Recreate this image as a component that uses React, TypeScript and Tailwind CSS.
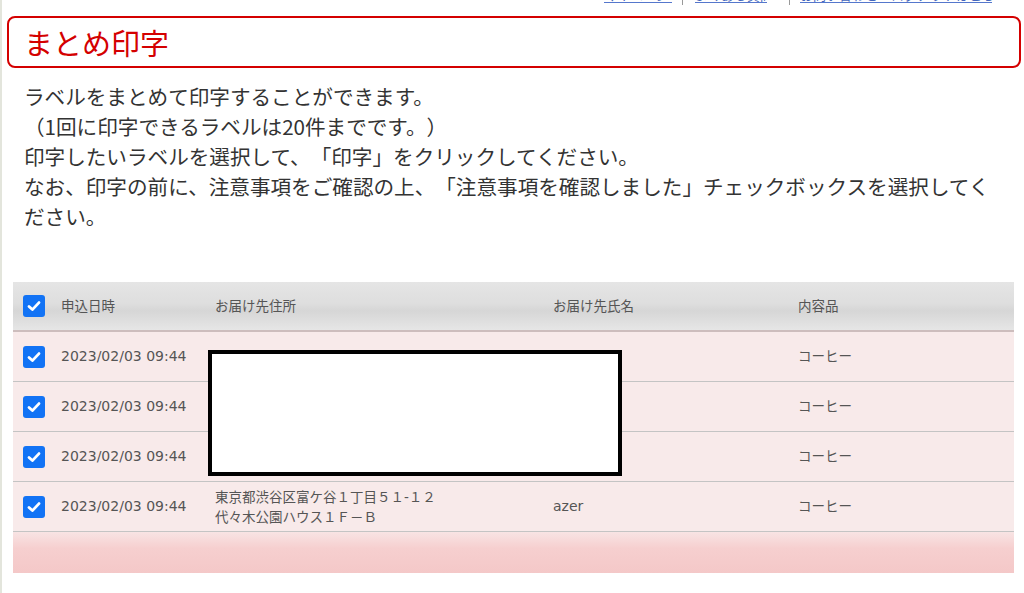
import React from 'react'

const rows = [
  { date: '2023/02/03 09:44', address: [], name: '', item: 'コーヒー' },
  { date: '2023/02/03 09:44', address: [], name: '', item: 'コーヒー' },
  { date: '2023/02/03 09:44', address: [], name: '', item: 'コーヒー' },
  {
    date: '2023/02/03 09:44',
    address: ['東京都渋谷区富ケ谷１丁目５１-１２', '代々木公園ハウス１Ｆ－Ｂ'],
    name: 'azer',
    item: 'コーヒー',
  },
]

function Check() {
  return (
    <div className="w-[22px] h-[22px] rounded-[3px] bg-[#1273f5] flex items-center justify-center flex-shrink-0">
      <svg width="16" height="16" viewBox="0 0 16 16" fill="none">
        <path d="M3 8.4 L6.4 11.6 L13 4.6" stroke="white" strokeWidth="2.8" strokeLinecap="round" strokeLinejoin="round" />
      </svg>
    </div>
  )
}

export default function App() {
  return (
    <div
      className="min-h-[593px] bg-white border-l-2 border-[#e3e5dc] text-[#333] [text-spacing-trim:space-all]"
      style={{ fontFamily: '"Noto Sans CJK JP", "Noto Sans", sans-serif' }}
    >
      {/* 上部リンク（見切れ） */}
      <div className="h-[5px] overflow-hidden flex justify-end pr-[32px] text-[13px] leading-[16px]">
        <div className="flex items-start -mt-[13px]">
          <a className="block w-[68px] h-[16px] overflow-hidden whitespace-nowrap text-[#4466bb] border-b border-[#5577cc]">マイページ</a>
          <span className="w-px h-[18px] bg-[#999] ml-[10px] mr-[12px]" />
          <a className="block w-[72px] h-[16px] overflow-hidden whitespace-nowrap text-[#4466bb] border-b border-[#5577cc]">よくある質問</a>
          <span className="w-px h-[18px] bg-[#999] ml-[22px] mr-[10px]" />
          <a className="block w-[192px] h-[16px] overflow-hidden whitespace-nowrap text-[#4466bb] border-b border-[#5577cc]">お問い合わせ・ログアウトはこちら</a>
        </div>
      </div>

      {/* タイトル */}
      <div className="mt-[11px] ml-[5px] mr-[3px] h-[52px] border-2 border-[#d40000] rounded-[8px] flex items-center pl-[15px]">
        <h1 className="text-[29px] text-[#d40000] leading-none">まとめ印字</h1>
      </div>

      {/* 説明 */}
      <div className="mt-[13px] pl-[22px] pr-[25px] text-[20.6px] leading-[30px] text-[#333]">
        <p>ラベルをまとめて印字することができます。</p>
        <p>（1回に印字できるラベルは20件までです。）</p>
        <p>印字したいラベルを選択して、「印字」をクリックしてください。</p>
        <p>なお、印字の前に、注意事項をご確認の上、「注意事項を確認しました」チェックボックスを選択してください。</p>
      </div>

      {/* テーブル */}
      <div
        className="mt-[51px] ml-[11px] mr-[10px] relative text-[13.5px] text-[#555]"
        style={{ fontFamily: '"DejaVu Sans", "Noto Sans CJK JP", sans-serif' }}
      >
        <div className="h-[50px] flex items-center bg-[linear-gradient(#e5e5e5_0%,#dedede_45%,#d6d6d6_60%,#e6e6e6_100%)] border-b-2 border-[#cdbdbd]">
          <div className="w-[48px] pl-[10px]"><Check /></div>
          <div className="w-[154px]">申込日時</div>
          <div className="w-[338px]">お届け先住所</div>
          <div className="w-[245px]">お届け先氏名</div>
          <div>内容品</div>
        </div>
        {rows.map((r, i) => (
          <div key={i} className="h-[50px] flex items-center bg-[#f8eaea] border-b border-[#c4c4c4]">
            <div className="w-[48px] pl-[10px]"><Check /></div>
            <div className="w-[154px] text-[14px]">{r.date}</div>
            <div className="w-[338px] leading-[20px]">
              {r.address.map((a, j) => (
                <div key={j}>{a}</div>
              ))}
            </div>
            <div className="w-[245px] text-[14px]">{r.name}</div>
            <div>{r.item}</div>
          </div>
        ))}
        <div className="h-[41px] bg-[linear-gradient(#f8e4e4_0%,#f6cfcf_40%,#f4c8c8_100%)]" />

        {/* 黒枠（マスク） */}
        <div className="absolute left-[195px] top-[68px] w-[414px] h-[126px] bg-white border-[4px] border-black" />
      </div>
    </div>
  )
}
